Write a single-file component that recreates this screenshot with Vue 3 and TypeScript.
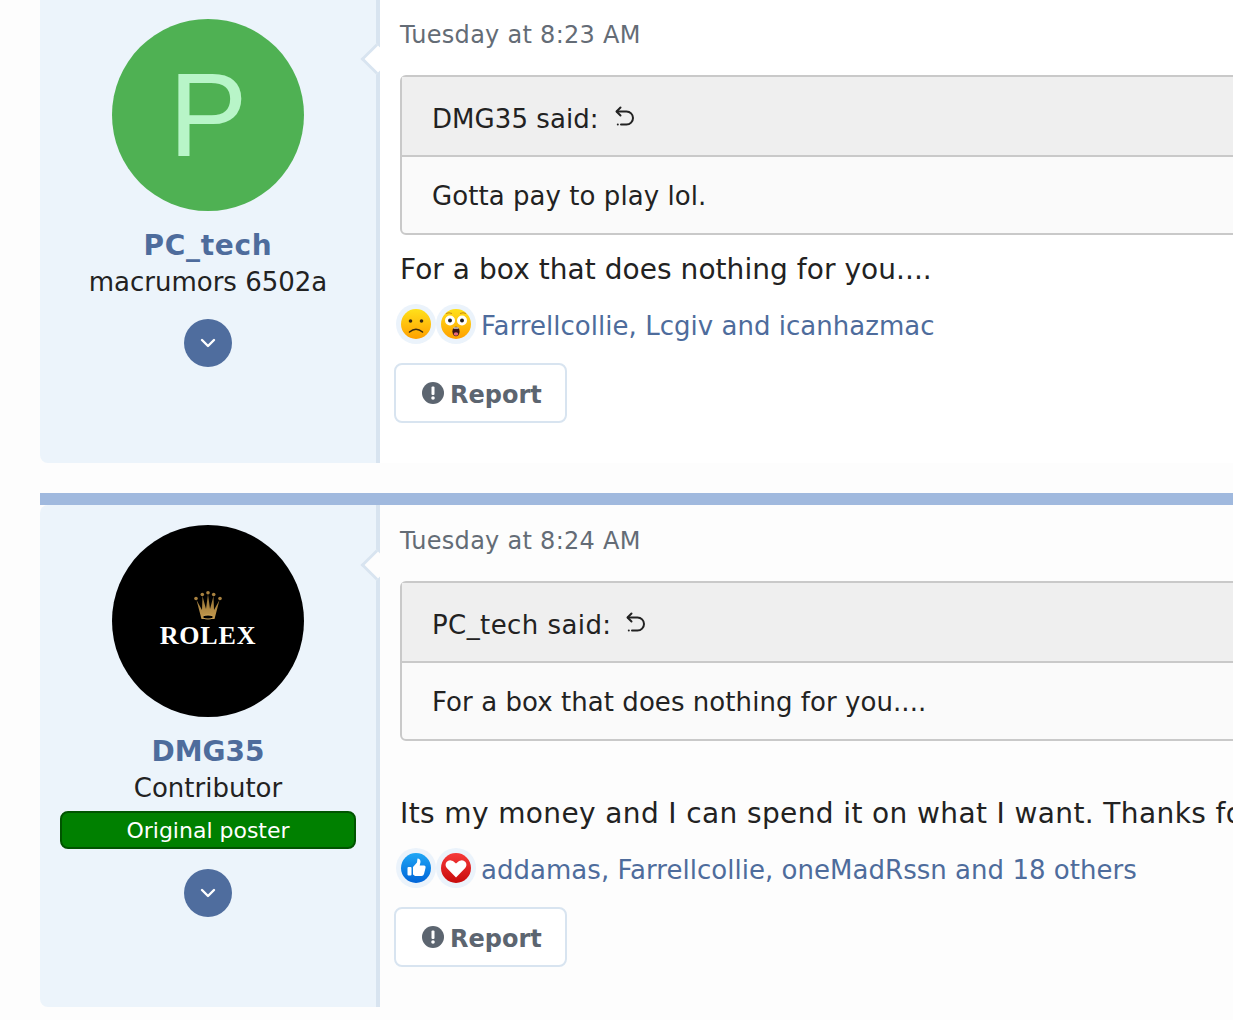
<script setup lang="ts">
interface Post {
  id: number
  name: string
  role: string
  op: boolean
  time: string
  quoteAuthor: string
  quote: string
  text: string
  spaced: boolean
  reactions: string
  kind: 'sad' | 'love'
}

const posts: Post[] = [
  {
    id: 1,
    name: 'PC_tech',
    role: 'macrumors 6502a',
    op: false,
    time: 'Tuesday at 8:23 AM',
    quoteAuthor: 'DMG35 said:',
    quote: 'Gotta pay to play lol.',
    text: 'For a box that does nothing for you....',
    spaced: false,
    reactions: 'Farrellcollie, Lcgiv and icanhazmac',
    kind: 'sad',
  },
  {
    id: 2,
    name: 'DMG35',
    role: 'Contributor',
    op: true,
    time: 'Tuesday at 8:24 AM',
    quoteAuthor: 'PC_tech said:',
    quote: 'For a box that does nothing for you....',
    text: 'Its my money and I can spend it on what I want. Thanks for your concern though.',
    spaced: true,
    reactions: 'addamas, Farrellcollie, oneMadRssn and 18 others',
    kind: 'love',
  },
]
</script>

<template>
  <div class="page">
    <article v-for="post in posts" :key="post.id" class="post" :class="{ 'post-second': post.id === 2 }">
      <aside class="side">
        <div v-if="post.id === 1" class="avatar avatar-p">P</div>
        <div v-else class="avatar avatar-rolex">
          <svg class="crown" viewBox="0 0 28 30" width="28" height="30">
            <defs>
              <linearGradient id="gold" x1="0" y1="0" x2="0" y2="1">
                <stop offset="0" stop-color="#8d6d32" />
                <stop offset="1" stop-color="#c79b4e" />
              </linearGradient>
            </defs>
            <path fill="url(#gold)" d="M7.5 28 L2.5 9 L8 19 L8.5 5 L12 18 L14 3 L16 18 L19.5 5 L20 19 L25.500 9 L20.500 28 Z" />
            <circle cx="2" cy="7.500" r="1.800" fill="#a98240" />
            <circle cx="8.300" cy="3.500" r="1.800" fill="#a98240" />
            <circle cx="14" cy="1.800" r="1.800" fill="#a98240" />
            <circle cx="19.700" cy="3.500" r="1.800" fill="#a98240" />
            <circle cx="26" cy="7.500" r="1.800" fill="#a98240" />
            <ellipse cx="14" cy="26" rx="5.500" ry="2" fill="#000" stroke="#d4a95a" stroke-width="1" />
          </svg>
          <span class="rolex-word">ROLEX</span>
        </div>
        <a class="name">{{ post.name }}</a>
        <div class="role">{{ post.role }}</div>
        <div v-if="post.op" class="badge">Original poster</div>
        <button class="more" type="button" aria-label="More">
          <svg viewBox="0 0 16 10" width="16" height="10">
            <path d="M2 2 L8 8 L14 2" fill="none" stroke="#fff" stroke-width="2.400" stroke-linecap="round" stroke-linejoin="round" />
          </svg>
        </button>
      </aside>
      <span class="arrow"></span>
      <section class="main">
        <div class="time">{{ post.time }}</div>
        <blockquote class="quote">
          <div class="quote-head">
            <span>{{ post.quoteAuthor }}</span>
            <svg class="undo" viewBox="0 0 22 24" width="22" height="24">
              <path d="M6.500 2.500 L2.500 6.500 L6.500 10.500" fill="none" stroke="#222" stroke-width="2" stroke-linecap="round" stroke-linejoin="round" />
              <path d="M3 6.500 H12.500 A6.500 6.500 0 0 1 12.500 19.500 H7" fill="none" stroke="#222" stroke-width="2" stroke-linecap="round" />
              <circle cx="3.800" cy="19.500" r="1" fill="#222" />
            </svg>
          </div>
          <div class="quote-body">{{ post.quote }}</div>
        </blockquote>
        <p class="text" :class="{ 'text-spaced': post.spaced }">{{ post.text }}</p>
        <div class="reactions">
          <span class="react-icon">
            <svg v-if="post.kind === 'sad'" viewBox="0 0 30 30" width="30" height="30">
              <defs>
                <linearGradient :id="'y1' + post.id" x1="0" y1="0" x2="0" y2="1">
                  <stop offset="0" stop-color="#ffe11a" />
                  <stop offset="1" stop-color="#ffa000" />
                </linearGradient>
              </defs>
              <circle cx="15" cy="15" r="15" :fill="'url(#y1' + post.id + ')'" />
              <circle cx="9.500" cy="12" r="1.800" fill="#3a2a10" />
              <circle cx="20.500" cy="12" r="1.800" fill="#3a2a10" />
              <path d="M8.500 23 Q15 17.500 21.500 23" fill="none" stroke="#3a2a10" stroke-width="1.600" stroke-linecap="round" />
            </svg>
            <svg v-else viewBox="0 0 30 30" width="30" height="30">
              <defs>
                <linearGradient id="blue" x1="0" y1="0" x2="0" y2="1">
                  <stop offset="0" stop-color="#1fa7f5" />
                  <stop offset="1" stop-color="#0064d8" />
                </linearGradient>
              </defs>
              <circle cx="15" cy="15" r="15" fill="url(#blue)" />
              <rect x="6.500" y="14" width="4" height="8.500" rx="1" fill="#fff" />
              <path fill="#fff" d="M12 14 L16 9.500 L16.500 5.500 Q19.500 5.500 19.500 9 L18.700 12.500 H23 Q25 12.500 24.500 15 L23 21 Q22.500 23 20.500 23 H14 L12 21.500 Z" />
            </svg>
          </span>
          <span class="react-icon">
            <svg v-if="post.kind === 'sad'" viewBox="0 0 30 30" width="30" height="30">
              <defs>
                <linearGradient :id="'y2' + post.id" x1="0" y1="0" x2="0" y2="1">
                  <stop offset="0" stop-color="#ffe11a" />
                  <stop offset="1" stop-color="#ffa000" />
                </linearGradient>
              </defs>
              <circle cx="15" cy="15" r="15" :fill="'url(#y2' + post.id + ')'" />
              <circle cx="9" cy="11.500" r="5" fill="#fff" />
              <circle cx="21" cy="11.500" r="5" fill="#fff" />
              <circle cx="9" cy="11.500" r="2" fill="#222" />
              <circle cx="21" cy="11.500" r="2" fill="#222" />
              <path d="M5 4.500 Q8 3 11 4.500 M19 4.500 Q22 3 25 4.500" fill="none" stroke="#c98a10" stroke-width="1" />
              <ellipse cx="15" cy="22.500" rx="3.600" ry="4.800" fill="#3a1515" />
              <ellipse cx="15" cy="25" rx="2.300" ry="1.800" fill="#e86a7a" />
              <path d="M12.500 19 H17.500" stroke="#fff" stroke-width="1.200" />
            </svg>
            <svg v-else viewBox="0 0 30 30" width="30" height="30">
              <defs>
                <linearGradient id="red" x1="0" y1="0" x2="0" y2="1">
                  <stop offset="0" stop-color="#f63a3a" />
                  <stop offset="1" stop-color="#c80b0b" />
                </linearGradient>
              </defs>
              <circle cx="15" cy="15" r="15" fill="url(#red)" />
              <path fill="#fff" d="M15 24.500 L5.800 15 Q3.500 12 5.500 9 Q9.500 5 15 10.500 Q20.500 5 24.500 9 Q26.500 12 24.200 15 Z" />
            </svg>
          </span>
          <a class="react-names">{{ post.reactions }}</a>
        </div>
        <button class="report" type="button">
          <svg viewBox="0 0 22 22" width="22" height="22">
            <circle cx="11" cy="11" r="11" fill="#5c6570" />
            <rect x="9.500" y="4.500" width="3" height="8.500" rx="1" fill="#fff" />
            <circle cx="11" cy="16" r="1.800" fill="#fff" />
          </svg>
          <span class="report-label">Report</span>
        </button>
      </section>
    </article>
  </div>
</template>

<style>
html, body {
  margin: 0;
  background: #fdfdfd;
}
</style>

<style scoped>
.page {
  width: 1233px;
  height: 1020px;
  overflow: hidden;
  box-sizing: border-box;
  padding: 0 0 0 40px;
  background: #fdfdfd;
  font-family: "DejaVu Sans", sans-serif;
  color: #222;
}
.post {
  position: relative;
  display: flex;
  width: 1300px;
  height: 464px;
  margin-top: -1px;
}
.post-second {
  height: 502px;
  margin-top: 42px;
}
.post-second::before {
  content: "";
  position: absolute;
  left: 0;
  right: 0;
  top: -12px;
  height: 12px;
  background: #a0b9de;
}
.side {
  box-sizing: border-box;
  flex: 0 0 340px;
  display: flex;
  flex-direction: column;
  align-items: center;
  padding: 20px 20px 0;
  background: #ecf4fb;
  border-right: 4px solid #d8e4f0;
  border-bottom-left-radius: 8px;
}
.post-second .side {
  border-top-left-radius: 8px;
}
.avatar {
  width: 192px;
  height: 192px;
  border-radius: 50%;
  flex: none;
}
.avatar-p {
  background: #4fb153;
  color: #b8f5c8;
  font-family: "Liberation Sans", sans-serif;
  font-size: 118px;
  line-height: 192px;
  text-align: center;
}
.avatar-rolex {
  background: #000;
  display: flex;
  flex-direction: column;
  align-items: center;
  padding-top: 66px;
  box-sizing: border-box;
}
.crown {
  display: block;
}
.rolex-word {
  font-family: "Liberation Serif", serif;
  font-weight: 700;
  font-size: 26px;
  line-height: 30px;
  letter-spacing: 0.8px;
  color: #fff;
}
.name {
  margin-top: 16px;
  font-size: 28px;
  line-height: 38px;
  font-weight: 700;
  color: #4e6c9c;
}
.post:first-child .name {
  letter-spacing: 0.7px;
}
.role {
  font-size: 26px;
  line-height: 36px;
  margin-top: -1px;
  color: #222;
}
.badge {
  box-sizing: border-box;
  width: 296px;
  height: 38px;
  margin-top: 5px;
  border: 2px solid #005400;
  border-radius: 8px;
  background: #008000;
  color: #fff;
  font-size: 22px;
  line-height: 36px;
  text-align: center;
}
.more {
  width: 48px;
  height: 48px;
  margin-top: 19px;
  padding: 0;
  border: 0;
  border-radius: 50%;
  background: #4f6d9e;
  display: flex;
  align-items: center;
  justify-content: center;
}
.post-second .more {
  margin-top: 20px;
}
.arrow {
  position: absolute;
  left: 325px;
  top: 49px;
  width: 22px;
  height: 22px;
  box-sizing: border-box;
  background: #fff;
  border-left: 3px solid #d8e4f0;
  border-bottom: 3px solid #d8e4f0;
  transform: rotate(45deg);
  z-index: 1;
}
.post-second .arrow {
  background: #fdfdfd;
}
.main {
  flex: 1;
  position: relative;
  box-sizing: border-box;
  padding: 19px 0 0 20px;
  background: #fff;
  white-space: nowrap;
}
.post-second .main {
  background: #fdfdfd;
}
.time {
  font-size: 24px;
  line-height: 34px;
  letter-spacing: 0.28px;
  color: #646c76;
}
.quote {
  margin: 23px 0 0;
  border: 2px solid #c9c9c9;
  border-radius: 6px;
  background: #fafafa;
  font-size: 26px;
  letter-spacing: 0.06px;
}
.quote-head {
  display: flex;
  align-items: center;
  gap: 15px;
  box-sizing: border-box;
  height: 80px;
  padding: 5px 30px 0;
  background: #efefef;
  border-bottom: 2px solid #c9c9c9;
}
.post-second .quote-head {
  letter-spacing: 0.42px;
  gap: 13px;
}
.undo {
  margin-top: -3px;
}
.quote-body {
  height: 76px;
  padding: 0 30px;
  line-height: 79px;
}
.text {
  margin: 15px 0 0;
  font-size: 28px;
  line-height: 40px;
  letter-spacing: 0.05px;
}
.text-spaced {
  margin-top: 53px;
  letter-spacing: 0.38px;
}
.reactions {
  display: flex;
  align-items: center;
  height: 40px;
  margin: 14px 0 0 -4px;
}
.react-icon {
  box-sizing: border-box;
  width: 40px;
  height: 40px;
  border-radius: 50%;
  background: #ebf3fb;
  display: flex;
  align-items: center;
  justify-content: center;
  flex: none;
}
.react-names {
  margin-left: 5px;
  padding-top: 4px;
  font-size: 26px;
  letter-spacing: 0.03px;
  color: #4e6c9c;
}
.report {
  display: flex;
  align-items: center;
  gap: 6px;
  box-sizing: border-box;
  width: 173px;
  height: 60px;
  margin: 19px 0 0 -6px;
  padding: 0 0 0 26px;
  border: 2px solid #d8e4f0;
  border-radius: 8px;
  background: #fff;
  color: #5c6570;
  font-family: inherit;
  font-weight: 700;
  font-size: 24px;
}
.report-label {
  padding-top: 4px;
}
</style>
